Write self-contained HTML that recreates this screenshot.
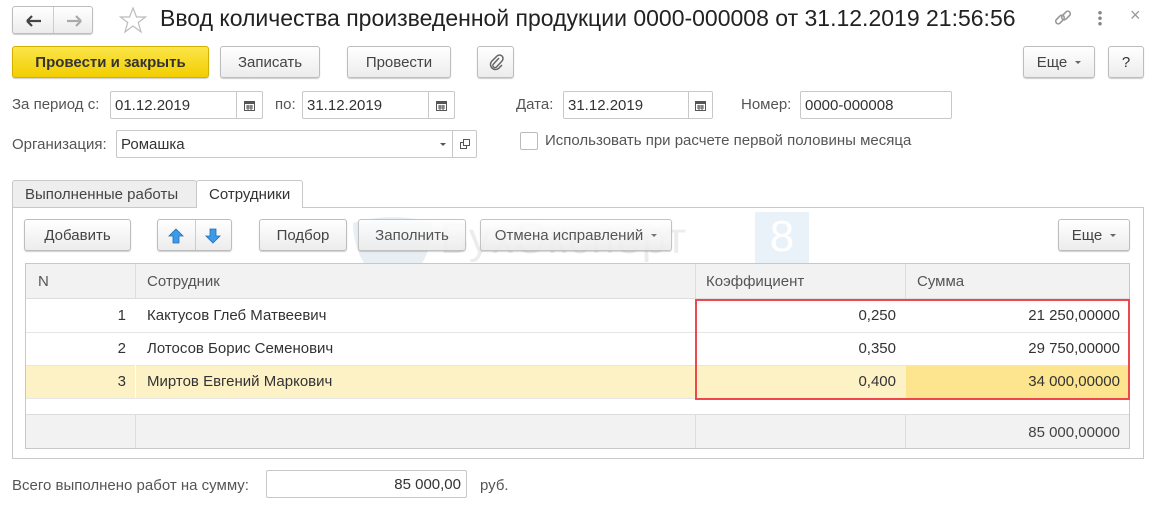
<!DOCTYPE html>
<html><head><meta charset="utf-8"><style>
*{box-sizing:border-box;margin:0;padding:0}
body{width:1152px;height:506px;background:#fff;font-family:"Liberation Sans",Arial,sans-serif;font-size:15px;color:#4d4d4d;position:relative;overflow:hidden}
.a{position:absolute}
.btn{position:absolute;border:1px solid #bdbdbd;border-radius:3px;background:linear-gradient(#fff,#ececec);box-shadow:0 1px 1px rgba(0,0,0,.2);display:flex;align-items:center;justify-content:center;color:#444;font-size:15px}
.inp{position:absolute;border:1px solid #c8c8c8;border-radius:2px;background:#fff;color:#333;font-size:15px;padding-left:4px;display:flex;align-items:center}
.cal{position:absolute;right:0;top:0;bottom:0;width:26px;border-left:1px solid #c8c8c8;display:flex;align-items:center;justify-content:center}
.lbl{position:absolute;font-size:15px;color:#555}
.cell{position:absolute;font-size:15px;color:#333;display:flex;align-items:center}
.dd{display:inline-block;width:0;height:0;border-left:3px solid transparent;border-right:3px solid transparent;border-top:3px solid #666;margin-left:8px}
</style></head><body>
<div class="btn" style="left:12px;top:6px;width:81px;height:28px;justify-content:flex-start">
 <div class="a" style="left:40px;top:0;bottom:0;border-left:1px solid #ccc"></div>
 <svg class="a" style="left:13px;top:8px" width="16" height="12"><path d="M1 6H15M1 6L6 1M1 6L6 11" stroke="#444" stroke-width="2.2" fill="none"/></svg>
 <svg class="a" style="left:53px;top:8px" width="16" height="12"><path d="M15 6H1M15 6L10 1M15 6L10 11" stroke="#aaa" stroke-width="2.2" fill="none"/></svg>
</div>
<svg class="a" style="left:118px;top:6px" width="30" height="28"><path d="M15 2L18.5 11H27.5L20.3 16.5L23 26L15 20L7 26L9.7 16.5L2.5 11H11.5Z" fill="none" stroke="#bbb" stroke-width="1.2"/></svg>
<div class="a" style="left:160px;top:5px;font-size:23px;color:#222;white-space:nowrap">Ввод количества произведенной продукции 0000-000008 от 31.12.2019 21:56:56</div>
<svg class="a" style="left:1053px;top:8px" width="20" height="20"><g fill="none" stroke="#999" stroke-width="1.6"><rect x="2" y="9" width="10" height="5" rx="2.5" transform="rotate(-45 7 11.5)"/><rect x="8" y="5" width="10" height="5" rx="2.5" transform="rotate(-45 13 7.5)"/></g></svg>
<div class="a" style="left:1098px;top:10px;width:4px;height:16px;background:radial-gradient(circle,#888 1.6px,transparent 2px) 0 0/4px 5.5px"></div>
<div class="a" style="left:1130px;top:5px;font-size:18px;color:#999">×</div>
<div class="btn" style="left:12px;top:46px;width:197px;height:32px;background:linear-gradient(#fbe54a,#f2ce00);border-color:#d4b000;color:#333;font-weight:bold">Провести и закрыть</div>
<div class="btn" style="left:220px;top:46px;width:100px;height:32px">Записать</div>
<div class="btn" style="left:347px;top:46px;width:104px;height:32px">Провести</div>
<div class="btn" style="left:477px;top:46px;width:37px;height:32px"><svg width="16" height="18"><path d="M11 5L5.5 11a2 2 0 0 0 3 3L14 8a3.5 3.5 0 0 0-5-5L3.5 8.5a5 5 0 0 0 7 7L14 12" fill="none" stroke="#666" stroke-width="1.5"/></svg></div>
<div class="btn" style="left:1023px;top:46px;width:72px;height:32px">Еще<span class="dd"></span></div>
<div class="btn" style="left:1108px;top:46px;width:36px;height:32px;color:#333">?</div>
<div class="lbl" style="left:12px;top:96px">За период с:</div>
<div class="inp" style="left:110px;top:91px;width:153px;height:28px">01.12.2019<div class="cal"><svg width="11" height="11"><rect x=".5" y="1.5" width="10" height="9" fill="none" stroke="#555"/><rect x="0" y="1" width="11" height="3" fill="#555"/><path d="M2 6h7M2 8h7M4 5v5M7 5v5" stroke="#555"/></svg></div></div>
<div class="lbl" style="left:275px;top:96px">по:</div>
<div class="inp" style="left:302px;top:91px;width:153px;height:28px">31.12.2019<div class="cal"><svg width="11" height="11"><rect x=".5" y="1.5" width="10" height="9" fill="none" stroke="#555"/><rect x="0" y="1" width="11" height="3" fill="#555"/><path d="M2 6h7M2 8h7M4 5v5M7 5v5" stroke="#555"/></svg></div></div>
<div class="lbl" style="left:516px;top:96px">Дата:</div>
<div class="inp" style="left:563px;top:91px;width:150px;height:28px">31.12.2019<div class="cal" style="width:24px"><svg width="11" height="11"><rect x=".5" y="1.5" width="10" height="9" fill="none" stroke="#555"/><rect x="0" y="1" width="11" height="3" fill="#555"/><path d="M2 6h7M2 8h7M4 5v5M7 5v5" stroke="#555"/></svg></div></div>
<div class="lbl" style="left:741px;top:96px">Номер:</div>
<div class="inp" style="left:800px;top:91px;width:152px;height:28px">0000-000008</div>
<div class="lbl" style="left:12px;top:136px">Организация:</div>
<div class="inp" style="left:116px;top:130px;width:361px;height:28px">Ромашка<div class="a" style="right:0;top:0;bottom:0;width:24px;border-left:1px solid #c8c8c8;display:flex;align-items:center;justify-content:center"><svg width="12" height="12"><rect x="1.5" y="4.5" width="6" height="6" fill="none" stroke="#555"/><rect x="4.5" y="1.5" width="6" height="6" fill="#fff" stroke="#555"/></svg></div><div class="a" style="right:30px;top:12px;border-left:3px solid transparent;border-right:3px solid transparent;border-top:3px solid #555"></div></div>
<div class="a" style="left:520px;top:132px;width:18px;height:18px;border:1px solid #bbb;border-radius:2px"></div>
<div class="lbl" style="left:545px;top:132px">Использовать при расчете первой половины месяца</div>
<div class="a" style="left:12px;top:180px;width:185px;height:28px;background:#eee;border:1px solid #c8c8c8;border-radius:3px 3px 0 0;padding:5px 0 0 12px;color:#444">Выполненные работы</div>
<div class="a" style="left:196px;top:180px;width:107px;height:28px;background:#fff;border:1px solid #c8c8c8;border-bottom:none;border-radius:3px 3px 0 0;padding:5px 0 0 12px;color:#333;z-index:2">Сотрудники</div>
<div class="a" style="left:12px;top:207px;width:1132px;height:252px;border:1px solid #c8c8c8"></div>
<svg class="a" style="left:348px;top:215px" width="90" height="80"><path d="M5 8Q45-4 85 8Q85 50 45 78Q5 50 5 8Z" fill="#dde7f0" opacity=".7"/></svg>
<div class="a" style="left:440px;top:214px;font-size:44px;color:#ececec;letter-spacing:1px">БухЭксперт</div>
<div class="a" style="left:755px;top:212px;width:54px;height:54px;background:#eaf2f9;color:#fff;font-size:44px;text-align:center">8</div>
<div class="a" style="left:460px;top:270px;font-size:22px;color:#eee;letter-spacing:5px">База ответов по учету</div>
<div class="btn" style="left:24px;top:219px;width:107px;height:32px">Добавить</div>
<div class="btn" style="left:157px;top:219px;width:75px;height:32px">
 <div class="a" style="left:37px;top:0;bottom:0;border-left:1px solid #ccc"></div>
 <svg class="a" style="left:10px;top:8px" width="16" height="16"><path d="M8 1L15 8H11V15H5V8H1Z" fill="#3b9be8" stroke="#1f6fb5" stroke-width=".8"/></svg>
 <svg class="a" style="left:47px;top:8px" width="16" height="16"><path d="M8 15L15 8H11V1H5V8H1Z" fill="#3b9be8" stroke="#1f6fb5" stroke-width=".8"/></svg>
</div>
<div class="btn" style="left:259px;top:219px;width:88px;height:32px">Подбор</div>
<div class="btn" style="left:358px;top:219px;width:108px;height:32px;opacity:.9">Заполнить</div>
<div class="btn" style="left:480px;top:219px;width:192px;height:32px;opacity:.9">Отмена исправлений<span class="dd"></span></div>
<div class="btn" style="left:1058px;top:219px;width:72px;height:32px">Еще<span class="dd"></span></div>
<div class="a" style="left:25px;top:263px;width:1105px;height:186px;border:1px solid #c8c8c8;overflow:hidden">
 <div class="a" style="left:0;top:0;width:1105px;height:35px;background:#f2f2f2;border-bottom:1px solid #ddd"></div>
 <div class="a" style="left:0;top:101px;width:1105px;height:33px;background:#fdf1c6"></div>
 <div class="a" style="left:880px;top:101px;width:225px;height:33px;background:#fde48e"></div>
 <div class="a" style="left:0;top:68px;width:1105px;border-top:1px solid #e6e6e6"></div>
 <div class="a" style="left:0;top:101px;width:1105px;border-top:1px solid #e6e6e6"></div>
 <div class="a" style="left:0;top:134px;width:1105px;border-top:1px solid #e6e6e6"></div>
 <div class="a" style="left:0;top:150px;width:1105px;height:36px;background:#f2f2f2;border-top:1px solid #ddd"></div>
 <div class="a" style="left:109px;top:0;height:35px;border-left:1px solid #ddd"></div>
 <div class="a" style="left:669px;top:0;height:35px;border-left:1px solid #ddd"></div>
 <div class="a" style="left:879px;top:0;height:35px;border-left:1px solid #ddd"></div>
 <div class="a" style="left:109px;top:101px;height:33px;border-left:1px solid #fff"></div>
 <div class="a" style="left:109px;top:150px;height:36px;border-left:1px solid #ddd"></div>
 <div class="a" style="left:669px;top:150px;height:36px;border-left:1px solid #ddd"></div>
 <div class="a" style="left:879px;top:150px;height:36px;border-left:1px solid #ddd"></div>
 <div class="cell" style="left:12px;top:0;height:35px;color:#555">N</div>
 <div class="cell" style="left:121px;top:0;height:35px;color:#555">Сотрудник</div>
 <div class="cell" style="left:680px;top:0;height:35px;color:#555">Коэффициент</div>
 <div class="cell" style="left:891px;top:0;height:35px;color:#555">Сумма</div>
 <div class="cell" style="left:0;width:100px;justify-content:flex-end;top:35px;height:33px">1</div>
 <div class="cell" style="left:121px;top:35px;height:33px">Кактусов Глеб Матвеевич</div>
 <div class="cell" style="left:670px;width:200px;justify-content:flex-end;top:35px;height:33px">0,250</div>
 <div class="cell" style="left:880px;width:214px;justify-content:flex-end;top:35px;height:33px">21 250,00000</div>
 <div class="cell" style="left:0;width:100px;justify-content:flex-end;top:68px;height:33px">2</div>
 <div class="cell" style="left:121px;top:68px;height:33px">Лотосов Борис Семенович</div>
 <div class="cell" style="left:670px;width:200px;justify-content:flex-end;top:68px;height:33px">0,350</div>
 <div class="cell" style="left:880px;width:214px;justify-content:flex-end;top:68px;height:33px">29 750,00000</div>
 <div class="cell" style="left:0;width:100px;justify-content:flex-end;top:101px;height:33px">3</div>
 <div class="cell" style="left:121px;top:101px;height:33px">Миртов Евгений Маркович</div>
 <div class="cell" style="left:670px;width:200px;justify-content:flex-end;top:101px;height:33px">0,400</div>
 <div class="cell" style="left:880px;width:214px;justify-content:flex-end;top:101px;height:33px">34 000,00000</div>
 <div class="cell" style="left:880px;width:214px;justify-content:flex-end;top:150px;height:36px;color:#444">85 000,00000</div>
</div>
<div class="a" style="left:695px;top:299px;width:435px;height:101px;border:2px solid #f0474b"></div>
<div class="lbl" style="left:12px;top:477px">Всего выполнено работ на сумму:</div>
<div class="inp" style="left:266px;top:470px;width:201px;height:28px;justify-content:flex-end;padding-right:5px">85 000,00</div>
<div class="lbl" style="left:480px;top:477px">руб.</div>
</body></html>
